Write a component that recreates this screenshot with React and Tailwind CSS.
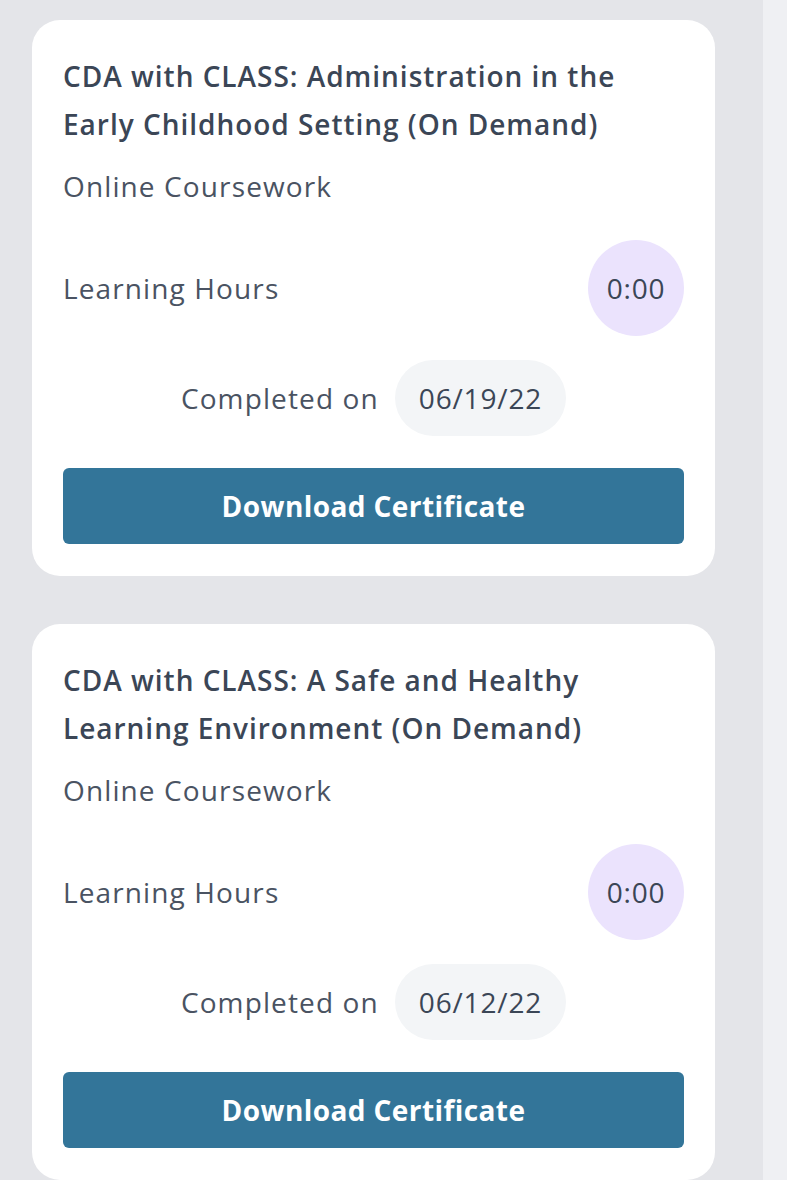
const courses = [
  {
    id: 1,
    title: "CDA with CLASS: Administration in the Early Childhood Setting (On Demand)",
    type: "Online Coursework",
    hours: "0:00",
    completed: "06/19/22",
  },
  {
    id: 2,
    title: "CDA with CLASS: A Safe and Healthy Learning Environment (On Demand)",
    type: "Online Coursework",
    hours: "0:00",
    completed: "06/12/22",
  },
]

function CourseCard({ course }) {
  return (
    <div className="bg-white rounded-[28px] px-[31px] pt-8 pb-8">
      <h2 className="text-[28px] leading-[48px] font-semibold tracking-[0.035em] text-[#3b4656] pr-1">{course.title}</h2>
      <div className="mt-[18px] text-[28px] leading-[40px] tracking-[0.04em] text-[#4a5362]">{course.type}</div>
      <div className="mt-[34px] flex items-center justify-between">
        <span className="text-[28px] tracking-[0.04em] text-[#4a5362]">Learning Hours</span>
        <div className="w-24 h-24 rounded-full bg-[#ebe3fd] flex items-center justify-center text-[28px] tracking-[0.03em] text-[#3b4656]">
          {course.hours}
        </div>
      </div>
      <div className="mt-6 flex items-center justify-center gap-4">
        <span className="text-[28px] tracking-[0.04em] text-[#4a5362]">Completed on</span>
        <span className="h-[76px] px-[24px] rounded-full bg-[#f3f5f7] flex items-center text-[28px] tracking-[0.03em] text-[#3b4656]">
          {course.completed}
        </span>
      </div>
      <button className="mt-8 w-full h-[76px] rounded-md bg-[#337599] text-white text-[28px] font-bold tracking-[0.015em]">
        Download Certificate
      </button>
    </div>
  )
}

export default function App() {
  return (
    <div className="h-[1180px] overflow-hidden bg-[#e4e5e9] flex" style={{ fontFamily: "'Open Sans', Lato, sans-serif" }}>
      <div className="w-[763px] pl-8 pr-12 pt-5 flex flex-col gap-12">
        {courses.map((course) => (
          <CourseCard key={course.id} course={course} />
        ))}
      </div>
      <div className="flex-1 bg-[#eff0f3]" />
    </div>
  )
}
